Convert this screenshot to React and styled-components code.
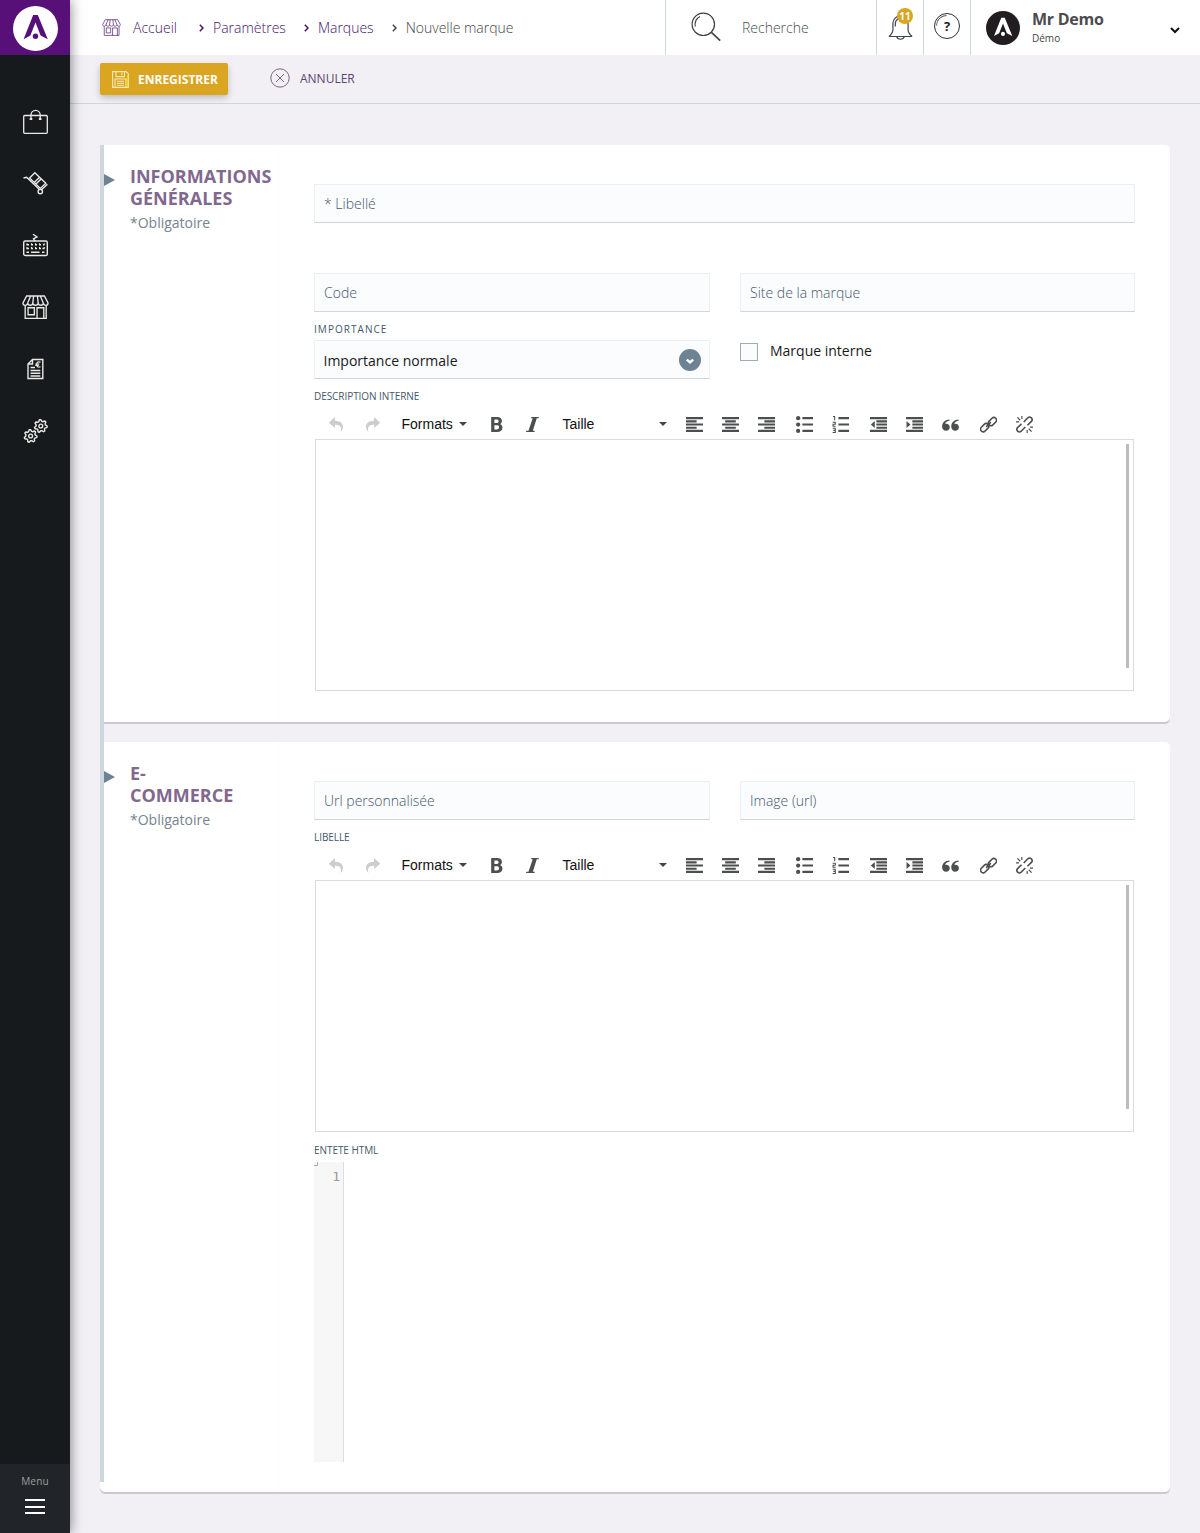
import React from 'react';
import styled, { createGlobalStyle, css } from 'styled-components';

const GlobalStyle = createGlobalStyle`
  *, *::before, *::after { box-sizing: border-box; }
  html, body { margin: 0; padding: 0; }
  body {
    background: #f2f0f5;
    font-family: 'Open Sans', 'Noto Sans', sans-serif;
    font-size: 14px;
    color: #17191c;
  }
`;

/* ---------- shell ---------- */

const Page = styled.div`
  display: flex;
  min-height: 1533px;
  width: 1200px;
`;

const Sidebar = styled.aside`
  position: relative;
  z-index: 2;
  display: flex;
  flex-direction: column;
  flex: 0 0 70px;
  background: #171a1c;
  box-shadow: 0 0 12px rgba(0, 0, 0, 0.5);
`;

const Brand = styled.div`
  display: flex;
  align-items: center;
  justify-content: center;
  height: 55px;
  padding: 2px 0 0 1px;
  background: #561078;
`;

const Nav = styled.nav`
  display: flex;
  flex-direction: column;
  padding: 35px 0 0 1px;
`;

const NavItem = styled.a`
  display: flex;
  align-items: center;
  justify-content: center;
  height: 62px;
  color: #e9e9e6;
`;

const MenuToggle = styled.button`
  display: flex;
  flex-direction: column;
  align-items: center;
  height: 69px;
  margin-top: auto;
  padding: 10px 0 0;
  border: 0;
  background: #212428;
  font: 400 10px/15px 'Open Sans', sans-serif;
  letter-spacing: 0.2px;
  color: #9b9fa1;
`;

const Burger = styled.span`
  display: flex;
  flex-direction: column;
  justify-content: space-between;
  width: 20px;
  height: 15px;
  margin-top: 10px;
`;

const BurgerLine = styled.i`
  height: 2px;
  background: #fff;
`;

const Content = styled.div`
  flex: 1;
  min-width: 0;
`;

/* ---------- header ---------- */

const TopBar = styled.header`
  display: flex;
  height: 55px;
  background: #fff;
`;

const Breadcrumb = styled.nav`
  display: flex;
  align-items: center;
  flex: 1;
  padding: 0 0 0 32px;
  font-size: 14px;
  font-weight: 300;
`;

const Crumb = styled.span`
  display: flex;
  align-items: center;
  gap: ${(p) => (p.$home ? '12px' : '9px')};
  margin-right: ${(p) => (p.$home ? '22px' : '18px')};
  color: ${(p) => (p.$current ? '#464649' : '#47146a')};
  white-space: nowrap;
`;

const Search = styled.div`
  display: flex;
  align-items: center;
  gap: 21px;
  width: 211px;
  padding: 0 0 1px 25px;
  border-left: 1px solid #ced7dd;
  font-weight: 300;
  color: #4c4c4f;
`;

const HeaderButton = styled.div`
  position: relative;
  display: flex;
  align-items: center;
  justify-content: center;
  width: 47px;
  border-left: 1px solid #ced7dd;
`;

const Badge = styled.span`
  position: absolute;
  top: 8px;
  right: 10px;
  width: 16px;
  height: 16px;
  border-radius: 50%;
  background: #daa520;
  color: #fff;
  font-size: 10px;
  font-weight: 700;
  line-height: 16px;
  text-align: center;
`;

const User = styled.div`
  display: flex;
  align-items: center;
  width: 230px;
  padding: 0 20px 0 15px;
  border-left: 1px solid #ced7dd;
`;

const UserText = styled.div`
  flex: 1;
  padding: 1px 0 0 12px;
`;

const UserName = styled.div`
  font-size: 16px;
  font-weight: 700;
  line-height: 20px;
  letter-spacing: -0.25px;
  color: #4c4c50;
`;

const UserRole = styled.div`
  font-size: 10px;
  line-height: 18px;
  color: #444448;
`;

const UserChevron = styled.span`
  display: flex;
  padding-top: 6px;
`;

const ActionBar = styled.div`
  display: flex;
  height: 49px;
  padding: 8px 0 0 30px;
  border-bottom: 1px solid #ced7dd;
`;

const SaveButton = styled.button`
  display: flex;
  align-items: center;
  gap: 9px;
  width: 128px;
  height: 32px;
  padding: 0 0 0 12px;
  border: 0;
  border-radius: 2px;
  background: #daa520;
  box-shadow: 0 3px 6px rgba(0, 0, 0, 0.22);
  font: 700 12px 'Open Sans', sans-serif;
  color: #fff;
`;

const CancelButton = styled.button`
  display: flex;
  align-items: center;
  gap: 10px;
  height: 30px;
  margin-left: 42px;
  padding: 0;
  border: 0;
  background: none;
  font: 400 12px 'Open Sans', sans-serif;
  color: #5b4670;
`;

/* ---------- form cards ---------- */

const Form = styled.main`
  position: relative;
  display: flex;
  flex-direction: column;
  gap: 20px;
  margin: 41px 30px 0;
`;

const Rail = styled.div`
  position: absolute;
  top: 0;
  bottom: 10px;
  left: 0;
  width: 4px;
  background: #ced7dd;
`;

const Card = styled.section`
  display: flex;
  height: ${(p) => p.$height}px;
  border-radius: 5px;
  background: #fff;
  box-shadow: 0 2px 0 #cbc9d0;
`;

const CardAside = styled.div`
  display: flex;
  align-items: flex-start;
  width: 179px;
  padding: 20px 0 0 4px;
  border-right: 1px solid #fcfcfd;
`;

const Arrow = styled.i`
  margin: 9px 15px 0 0;
  border: solid transparent;
  border-width: 6.5px 0 6.5px 11px;
  border-left-color: #6d8292;
`;

const CardTitle = styled.h2`
  width: 104px;
  margin: 0;
  font-size: 18px;
  font-weight: 700;
  line-height: 22px;
  letter-spacing: 0;
  color: #80688f;
`;

const Required = styled.p`
  margin: 4px 0 0;
  font-size: 14px;
  line-height: 20px;
  color: #758490;
`;

const CardBody = styled.div`
  flex: 1;
  padding: 39px 35px 0;
`;

const Row = styled.div`
  display: grid;
  grid-template-columns: ${(p) => (p.$single ? '1fr' : '396px 395px')};
  gap: 30px;
  margin-bottom: ${(p) => p.$after || 0}px;
`;

const fieldBox = css`
  width: 100%;
  height: 39px;
  border: 1px solid #eceff2;
  border-bottom-color: #ced5db;
  background: #fbfcfe;
`;

const Input = styled.input`
  ${fieldBox}
  padding: 0 9px;
  outline: 0;
  font: 300 14px 'Open Sans', sans-serif;
  &::placeholder { color: #43586c; opacity: 1; }
`;

const Label = styled.div`
  height: ${(p) => p.$height || 14}px;
  font-size: 10px;
  line-height: 14px;
  letter-spacing: ${(p) => p.$spacing || '-0.06px'};
  color: #43586c;
`;

const Select = styled.div`
  ${fieldBox}
  display: flex;
  align-items: center;
  justify-content: space-between;
  padding: 0 8px;
  font-size: 14px;
`;

const SelectValue = styled.span`
  padding: 2px 0 0 0.5px;
`;

const CheckLabel = styled.label`
  display: flex;
  align-items: flex-start;
  gap: 12px;
  padding-top: 21px;
  font-size: 14px;
  line-height: 16px;
`;

const CheckBox = styled.span`
  width: 18px;
  height: 18px;
  border: 1px solid #9dabb5;
  background: #fbfcfd;
`;

/* ---------- rich text editor ---------- */

const Tools = styled.div`
  display: flex;
  align-items: center;
  height: 36px;
  padding: 6px 0 0 4px;
  color: #4d4e50;
  font: 14px 'Liberation Sans', Arial, sans-serif;
`;

const Tool = styled.span`
  display: flex;
  align-items: center;
  justify-content: center;
  width: 36px;
  height: 30px;
  margin-left: ${(p) => (p.$group ? '2px' : 0)};
  opacity: ${(p) => (p.$off ? 0.28 : 1)};
`;

const Menu = styled.span`
  display: flex;
  align-items: center;
  justify-content: space-between;
  width: ${(p) => p.$width}px;
  margin: ${(p) => (p.$wide ? '0 9px 0 12.5px' : '0 11px 0 11.5px')};
  color: #111;
`;

const Caret = styled.i`
  border: solid transparent;
  border-width: 4px 4px 0;
  border-top-color: #444;
`;

const EditArea = styled.div`
  display: flex;
  justify-content: flex-end;
  width: 819px;
  height: 252px;
  margin-left: 1px;
  padding: 4px 4px 0 0;
  border: 1px solid #d9dbdd;
`;

const ScrollThumb = styled.i`
  width: 3px;
  height: 224px;
  background: #bcbcbc;
`;

const Code = styled.div`
  display: flex;
  height: 300px;
`;

const Gutter = styled.div`
  width: 30px;
  padding: 6px 3px 0 0;
  border-right: 1px solid #ddd;
  background: #f7f7f7;
  color: #999;
  font: 13px/18px 'DejaVu Sans Mono', monospace;
  text-align: right;
`;

const Corner = styled.i`
  position: absolute;
  width: 4px;
  height: 4px;
  border: solid #aaa;
  border-width: 0 1px 1px 0;
`;

/* ---------- drawings ---------- */

const Line = ({ w, h, box, sw = 1, children, ...rest }) => (
  <svg width={w} height={h} viewBox={box || `0 0 ${w} ${h}`} fill="none" stroke="currentColor" strokeWidth={sw} {...rest}>
    {children}
  </svg>
);

const Logo = ({ size, disc, mark }) => (
  <svg width={size} height={size} viewBox="0 0 45 45">
    <circle cx="22.5" cy="22.5" r="22.5" fill={disc} />
    <path d="M20.2 9h4.6L34.8 33.2 27.6 29.6 22.5 16.5 17.4 29.6 10.6 33.2z" fill={mark} />
    <circle cx="22.5" cy="30.3" r="2.7" fill={mark} />
  </svg>
);

const Bag = () => (
  <Line w={25} h={26} sw={1.3}>
    <rect x=".7" y="7.500" width="23.600" height="17.800" rx="1" />
    <path d="M8 11V7a4.600 4.600 0 0 1 9.200 0v4" />
    <path d="M6.700 11h2.600M15.900 11h2.600" strokeWidth="2" />
  </Line>
);

const Trolley = () => (
  <Line w={25} h={24} sw={1.4}>
    <path d="M.5 7 3.600 6.200 16 18M18.800 18.500 24.400 13.200" />
    <path d="M6.600 7 11.800 1.800 22.800 12.200 17.400 17.400zM11.200 11.400 16.600 6.200M13 13 18.300 7.800" />
    <circle cx="17.300" cy="20.500" r="2.200" />
  </Line>
);

const Keyboard = () => (
  <Line w={25} h={24} box="0.5 0 25 24" sw={1.4}>
    <rect x="1.2" y="8" width="23.6" height="14.5" rx="1.6" />
    <path d="M10.5 1.200 14.500 4 11 5.800 12.500 8" />
    <path d="M4 11.700h2.500M8.500 11.700h2M12.500 11.700h2M16.500 11.700h2M20.500 11.700H22M4 15.500h2.500M8.500 15.500h2M12.500 15.500h2M16.500 15.500h2M20 15.500h2M4 19.200h2.500M8.500 19.200h8.500M19.500 19.200H22" strokeWidth="1.500" />
    <path d="M4.500 10.200v1.500M9 10.200v1.500M13 10.200v1.500M17 10.200v1.500M21.700 10.200v1.500M4.500 14v1.500M9 14v1.500M13 14v1.500M17 14v1.500M21.700 14v1.500" strokeWidth="1.100" />
  </Line>
);

const Shop = ({ w = 27, sw = 1.4 }) => (
  <Line w={w} h={(w * 25) / 28} box="0 0 28 25" sw={sw}>
    <path d="M4.8 1h18.4L27 8.2c0 3.3-4.4 3.3-4.9.2-.3 3-5 3-5.3 0-.3 3-5.3 3-5.6 0-.3 3-5 3-5.3 0C5.400 11.500 1 11.500 1 8.200zM9 1 5.900 8.400M12 1l-.8 7.400M16 1l.8 7.400M19 1l3.100 7.400" />
    <path d="M3.300 11v13.200h21.800V11M15.600 24V13.200h7V24M6.300 13.200h6.500v7.300H6.300z" />
  </Line>
);

const Invoice = () => (
  <Line w={17} h={22} box="0.5 0 17 22" sw={1.4}>
    <path d="M6 1.500h10.300v19H1.500V6zM6 1.500V6H1.500" />
    <path d="M4 9.500h4.500M4 12.500h9.800M4 15.200h9.800M4 18h9.800" />
    <path d="M14 4.300c-2.600-1.100-4 .4-4 2.300s1.600 3.300 4 2.200M8.800 6h4M8.800 7.400h3.500" strokeWidth="1.200" />
  </Line>
);

const gearPath = (cx, cy, r) => {
  const pts = [];
  for (let i = 0; i < 28; i += 1) {
    const a = (i / 28) * Math.PI * 2;
    const k = i % 4 < 2 ? r : r * 0.74;
    pts.push(`${(cx + Math.cos(a) * k).toFixed(2)} ${(cy + Math.sin(a) * k).toFixed(2)}`);
  }
  return `M${pts.join('L')}z`;
};

const Gears = () => (
  <Line w={26} h={26} sw={1.4} strokeLinejoin="round">
    <path d={gearPath(17.8, 8, 6.4)} />
    <circle cx="17.8" cy="8" r="1.900" />
    <path d={gearPath(7.6, 18, 6.4)} />
    <circle cx="7.6" cy="18" r="1.900" />
  </Line>
);

const Chevron = ({ down, color = 'currentColor' }) => (
  <svg width={down ? 10 : 5} height={down ? 7 : 8} viewBox={down ? '0 0 10 7' : '0 0 5 8'} fill="none" stroke={color} strokeWidth={down ? 2 : 1.5}>
    <path d={down ? 'M1 1l4 4 4-4' : 'M.8.800 4 4 .8 7.200'} />
  </svg>
);

const Magnifier = () => (
  <Line w={30} h={30} sw={1.2} style={{ color: '#3f4044' }}>
    <circle cx="12.300" cy="12.300" r="11.200" />
    <path d="M20.400 20.300 29.200 28.600" strokeWidth="1.600" />
    <path d="M4.300 14.500c-1-4.500 1.200-8.500 4.700-10" />
  </Line>
);

const Bell = () => (
  <Line w={26} h={28} sw={1.2} style={{ color: '#3e4552' }}>
    <path d="M1.800 22.500h23.400M2 22.500c2.800-2.500 3.900-4 3.900-6.800V9.500a7.600 7.600 0 0 1 15.200 0v6.200c0 2.800 1.100 4.300 3.900 6.800" />
    <path d="M9.700 22.700c.8 3.400 6.800 3.400 7.600 0M8.300 12.500V9.500c0-2.500 1.500-4 3-4.800" />
  </Line>
);

const HelpRing = styled.span`
  display: flex;
  align-items: center;
  justify-content: center;
  width: 26px;
  height: 26px;
  margin-top: -4px;
  border: 1.3px solid #2e2f33;
  border-radius: 50%;
  font-size: 13px;
  font-weight: 700;
  line-height: 24px;
  color: #222;
`;

const HelpGlint = styled.i`
  position: absolute;
  top: 15px;
  left: 12px;
  width: 21px;
  height: 21px;
  border: 1px solid transparent;
  border-top-color: #55565a;
  border-radius: 50%;
  transform: rotate(-45deg);
`;

const Disk = () => (
  <Line w={17} h={17} sw={1.1} style={{ color: '#fbe9b4' }}>
    <path d="M.6.600h13.500l2.300 2.300v13.500H.6z" />
    <path d="M4 .6v5h8.500v-5M9.800 1.800v2.400M3 16.400V8h11v8.400M5 10.300h7M5 12.300h7M5 14.300h7" />
    <path d="M15.800 4v12" stroke="#fbe000" />
  </Line>
);

const CancelMark = () => (
  <Line w={20} h={20} sw={0.9} style={{ color: '#68587a' }}>
    <circle cx="10" cy="10" r="9.200" />
    <path d="M6 6l8 8M14 6l-8 8" />
  </Line>
);

const SelectMark = () => (
  <svg width="22" height="22" viewBox="0 0 22 22">
    <circle cx="11" cy="11" r="11" fill="#6d8292" />
    <path d="M7.800 10.700 11 13.500l3.200-2.800" fill="none" stroke="#fff" strokeWidth="2.400" />
  </svg>
);

const toolShapes = {
  undo: <path d="M6.500 1 .8 6.300l5.700 5V8.200c4.800-.2 6.800 2 5.300 6.800C16.300 10.500 14 4.300 6.500 4.400z" />,
  redo: <path d="M9.500 1l5.700 5.300-5.700 5V8.200C4.700 8 2.700 10.200 4.200 15-.3 10.500 2 4.300 9.500 4.400z" />,
  bold: <path fillRule="evenodd" d="M3 1h5.500c3 0 4.600 1.300 4.600 3.600 0 1.500-.8 2.600-2 3 1.600.4 2.500 1.600 2.500 3.200 0 2.700-1.900 4.200-5 4.200H3zm3 2.300v3.300h2c1.300 0 2-.6 2-1.700s-.7-1.600-2-1.600zm0 5.500v3.900h2.200c1.500 0 2.200-.7 2.200-2s-.8-1.900-2.200-1.900z" />,
  italic: <path d="M7 1h7l-.3 1.200h-1.700L8.300 13.800h1.900L9.900 15h-8l.3-1.200h2L8.200 2.200H6.600z" />,
  left: <path d="M0 1h16v2H0zM0 4h10v2H0zM0 7h16v2H0zM0 10h10v2H0zM0 13h16v2H0z" />,
  center: <path d="M0 1h16v2H0zM3 4h10v2H3zM0 7h16v2H0zM3 10h10v2H3zM0 13h16v2H0z" />,
  right: <path d="M0 1h16v2H0zM6 4h10v2H6zM0 7h16v2H0zM6 10h10v2H6zM0 13h16v2H0z" />,
  bullets: (
    <>
      <path d="M6 1h10v2H6zM6 7h10v2H6zM6 13h10v2H6z" />
      <circle cx="2" cy="2" r="2" />
      <circle cx="2" cy="8" r="2" />
      <circle cx="2" cy="14" r="2" />
    </>
  ),
  numbers: (
    <>
      <path d="M6 1h10v2H6zM6 7h10v2H6zM6 13h10v2H6z" />
      <path d="M1 .5h1.500V4M.6 5.900h2.500v1.800H1v1.900h2.400M.6 11.500h2.500v4H.6M1.200 13.500h1.900" fill="none" stroke="currentColor" strokeWidth="1" />
    </>
  ),
  outdent: <path d="M0 1h16v2H0zM6 4h10v2H6zM6 7h10v2H6zM6 10h10v2H6zM0 13h16v2H0zM4.500 4.800v6.400L.8 8z" />,
  indent: <path d="M0 1h16v2H0zM6 4h10v2H6zM6 7h10v2H6zM6 10h10v2H6zM0 13h16v2H0zM.5 4.800v6.400L4.200 8z" />,
  quote: <path d="M7 3.300C3 3.300.1 6 .1 9.900c0 2.300 1.500 4 3.700 4 2 0 3.500-1.400 3.500-3.400S5.900 7.200 4 7.200c-.4 0-.8 0-1.100.2C3.300 5.800 5 4.700 7 4.500zM15.600 3.300c-4 0-6.900 2.700-6.900 6.600 0 2.300 1.500 4 3.700 4 2 0 3.500-1.400 3.500-3.400s-1.400-3.300-3.300-3.300c-.4 0-.8 0-1.100.2.400-1.600 2.100-2.700 4.100-2.900z" />,
  link: (
    <g fill="none" stroke="currentColor" strokeWidth="1.500">
      <rect x="7.300" y="2.700" width="8.800" height="5" rx="2.500" transform="rotate(-45 11.700 5.200)" />
      <rect x="0" y="8.500" width="8.800" height="5" rx="2.500" transform="rotate(-45 4.400 11)" />
      <path d="M5.800 10.200l4.400-4.400" />
    </g>
  ),
  unlink: (
    <g fill="none" stroke="currentColor" strokeWidth="1.500">
      <path d="M7.300 5.700l3.800-4c2.400-2 5.400 1 3.400 3.400l-3.700 3.600M8.700 10.300l-3.800 4c-2.400 2-5.400-1-3.400-3.400l3.700-3.600" />
      <path d="M1.300 1.300l2.700 2.700M5.500 0v2.900M0 5.500h2.900M14.700 14.700l-2.700-2.700M10.500 16v-2.900M16 10.500h-2.900" strokeWidth="1.100" />
    </g>
  ),
};

const ToolIcon = ({ name }) => (
  <svg width="17" height="17" viewBox="0 0 16 16" fill="currentColor">{toolShapes[name]}</svg>
);

/* ---------- composition ---------- */

const Editor = () => (
  <>
    <Tools>
      <Tool $off><ToolIcon name="undo" /></Tool>
      <Tool $off><ToolIcon name="redo" /></Tool>
      <Menu $width={65.5}>Formats<Caret /></Menu>
      <Tool><ToolIcon name="bold" /></Tool>
      <Tool><ToolIcon name="italic" /></Tool>
      <Menu $width={104.5} $wide>Taille<Caret /></Menu>
      <Tool><ToolIcon name="left" /></Tool>
      <Tool><ToolIcon name="center" /></Tool>
      <Tool><ToolIcon name="right" /></Tool>
      <Tool $group><ToolIcon name="bullets" /></Tool>
      <Tool><ToolIcon name="numbers" /></Tool>
      <Tool $group><ToolIcon name="outdent" /></Tool>
      <Tool><ToolIcon name="indent" /></Tool>
      <Tool><ToolIcon name="quote" /></Tool>
      <Tool $group><ToolIcon name="link" /></Tool>
      <Tool><ToolIcon name="unlink" /></Tool>
    </Tools>
    <EditArea><ScrollThumb /></EditArea>
  </>
);

const navIcons = [Bag, Trolley, Keyboard, Shop, Invoice, Gears];

export default function App() {
  return (
    <>
      <GlobalStyle />
      <Page>
        <Sidebar>
          <Brand><Logo size={45} disc="#fff" mark="#561078" /></Brand>
          <Nav>
            {navIcons.map((Icon, i) => <NavItem key={i}><Icon /></NavItem>)}
          </Nav>
          <MenuToggle>
            Menu
            <Burger><BurgerLine /><BurgerLine /><BurgerLine /></Burger>
          </MenuToggle>
        </Sidebar>
        <Content>
          <TopBar>
            <Breadcrumb>
              <Crumb $home><Shop w={19} sw={1} />Accueil</Crumb>
              <Crumb><Chevron />Paramètres</Crumb>
              <Crumb><Chevron />Marques</Crumb>
              <Crumb $current><Chevron />Nouvelle marque</Crumb>
            </Breadcrumb>
            <Search><Magnifier />Recherche</Search>
            <HeaderButton><Bell /><Badge>11</Badge></HeaderButton>
            <HeaderButton><HelpRing>?</HelpRing><HelpGlint /></HeaderButton>
            <User>
              <Logo size={34} disc="#211d20" mark="#fff" />
              <UserText>
                <UserName>Mr Demo</UserName>
                <UserRole>Démo</UserRole>
              </UserText>
              <UserChevron><Chevron down color="#111" /></UserChevron>
            </User>
          </TopBar>
          <ActionBar>
            <SaveButton><Disk />ENREGISTRER</SaveButton>
            <CancelButton><CancelMark />ANNULER</CancelButton>
          </ActionBar>
          <Form>
            <Card $height={577}>
              <CardAside>
                <Arrow />
                <div>
                  <CardTitle>INFORMATIONS GÉNÉRALES</CardTitle>
                  <Required>*Obligatoire</Required>
                </div>
              </CardAside>
              <CardBody>
                <Row $single $after={50}><Input placeholder="* Libellé" /></Row>
                <Row $after={10}>
                  <Input placeholder="Code" />
                  <Input placeholder="Site de la marque" />
                </Row>
                <Row $after={10}>
                  <div>
                    <Label $height={18} $spacing="1.05px">IMPORTANCE</Label>
                    <Select><SelectValue>Importance normale</SelectValue><SelectMark /></Select>
                  </div>
                  <CheckLabel><CheckBox />Marque interne</CheckLabel>
                </Row>
                <Label>DESCRIPTION INTERNE</Label>
                <Editor />
              </CardBody>
            </Card>
            <Card $height={750}>
              <CardAside>
                <Arrow />
                <div>
                  <CardTitle>E-COMMERCE</CardTitle>
                  <Required>*Obligatoire</Required>
                </div>
              </CardAside>
              <CardBody>
                <Row $after={10}>
                  <Input placeholder="Url personnalisée" />
                  <Input placeholder="Image (url)" />
                </Row>
                <Label>LIBELLE</Label>
                <Editor />
                <Row $single $after={11} />
                <Label $height={19}>ENTETE HTML</Label>
                <Code><Corner /><Gutter>1</Gutter></Code>
              </CardBody>
            </Card>
            <Rail />
          </Form>
        </Content>
      </Page>
    </>
  );
}
